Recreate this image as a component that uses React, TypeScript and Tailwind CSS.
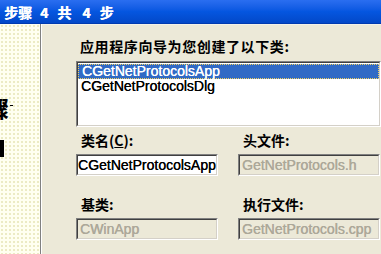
import React from "react";

const cjk = { fontFamily: '"SimSun","Noto Sans CJK SC",sans-serif' };
const latin = { fontFamily: '"Liberation Sans",Arial,sans-serif' };

function Sunken({ children, className = "", bg = "bg-white" }: { children?: React.ReactNode; className?: string; bg?: string }) {
  return (
    <div className={`border-t border-l border-[#808080] border-b border-r border-b-white border-r-white ${className}`}>
      <div className={`h-full border-t border-l border-[#404040] border-b border-r border-b-[#d4d0c8] border-r-[#d4d0c8] ${bg}`}>
        {children}
      </div>
    </div>
  );
}

function Label({ text }: { text: React.ReactNode }) {
  return (
    <div className="ml-[5px] h-[14px] text-[14px] leading-[14px] font-bold text-black" style={cjk}>
      {text}
    </div>
  );
}

function Field({ value, disabled }: { value: string; disabled?: boolean }) {
  return (
    <Sunken className="h-[22px] w-[142px]" bg={disabled ? "bg-[#ece9d8]" : "bg-white"}>
      <div
        className={`h-full flex items-center text-[14px] leading-[16px] whitespace-nowrap [text-shadow:0.3px_0_0_currentColor] ${disabled ? "text-[#aca899] pl-[2px]" : "text-black"}`}
        style={latin}
      >
        {value}
      </div>
    </Sunken>
  );
}

export default function App() {
  return (
    <div className="w-[381px] h-[254px] overflow-hidden flex flex-col bg-[#ece9d8]">
      {/* title bar */}
      <div className="h-[24px] shrink-0 bg-gradient-to-b from-[#2a6ef0] via-[#0556e0] to-[#0348c8] border-b border-[#003ab0] flex items-center pl-[4px] text-white font-bold text-[14px] leading-[14px] [text-shadow:0.4px_0_0_currentColor]" style={cjk}>
        <span>步骤</span>
        <span className="ml-[8px]">4</span>
        <span className="ml-[9px]">共</span>
        <span className="ml-[11px]">4</span>
        <span className="ml-[9px]">步</span>
      </div>
      <div className="flex-1 flex min-h-0">
        {/* left picture panel */}
        <div className="w-[40px] shrink-0 relative overflow-hidden bg-[#fffff0] bg-[radial-gradient(#ecebc4_0.8px,transparent_0.9px)] bg-[length:4px_4px]">
          <div className="absolute left-[-13px] top-[72px] text-[22px] leading-[22px] font-black text-black" style={cjk}>
            骤
          </div>
          <div className="absolute left-[10px] top-[81px] w-[3px] h-[1px] bg-black" />
          <div className="absolute left-0 top-[116px] w-[4px] h-[17px] bg-black" />
        </div>
        <div className="w-[1px] bg-[#808080]" />
        <div className="w-[1px] bg-white" />
        {/* right content */}
        <div className="flex-1 flex flex-col pl-[34px] pt-[14px] border-t border-[#f4f2e8]">
          <div className="ml-[4px] h-[14px] text-[14px] leading-[14px] font-bold text-black tracking-[0.6px] whitespace-nowrap" style={cjk}>
            应用程序向导为您创建了以下类:
          </div>
          <Sunken className="mt-[8px] h-[66px] w-[305px]">
            <div className="pt-[1px] text-[14px] leading-[15px] [text-shadow:0.3px_0_0_currentColor]" style={latin}>
              <div className="h-[15px] bg-[#316ac5] text-white pl-[3px] border border-dotted border-[#f0d060] flex items-center">
                CGetNetProtocolsApp
              </div>
              <div className="h-[15px] text-black pl-[3px] flex items-center">CGetNetProtocolsDlg</div>
            </div>
          </Sunken>
          <div className="flex gap-[20px] mt-[6px]">
            <div className="flex flex-col gap-[7px]">
              <Label text={<>类名(<span className="underline">C</span>):</>} />
              <Field value="CGetNetProtocolsApp" />
            </div>
            <div className="flex flex-col gap-[7px]">
              <Label text="头文件:" />
              <Field value="GetNetProtocols.h" disabled />
            </div>
          </div>
          <div className="flex gap-[20px] mt-[21px]">
            <div className="flex flex-col gap-[7px]">
              <Label text="基类:" />
              <Field value="CWinApp" disabled />
            </div>
            <div className="flex flex-col gap-[7px]">
              <Label text="执行文件:" />
              <Field value="GetNetProtocols.cpp" disabled />
            </div>
          </div>
        </div>
      </div>
    </div>
  );
}
